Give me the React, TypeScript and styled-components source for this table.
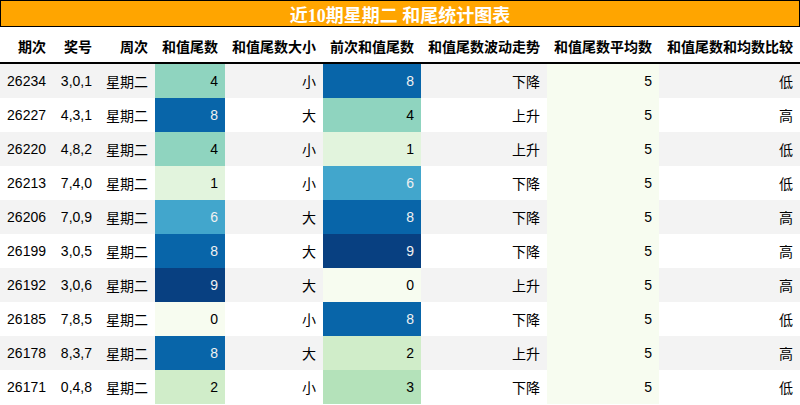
import React from "react";
import styled, { createGlobalStyle } from "styled-components";

const Global = createGlobalStyle`
  html, body { margin: 0; padding: 0; background: #ffffff; }
  body { font-family: "Liberation Sans", "Noto Sans CJK SC", sans-serif; }
`;

const Page = styled.div`
  width: 800px;
  height: 405px;
  overflow: hidden;
  display: flex;
  flex-direction: column;
`;

const Title = styled.div`
  height: 25px;
  background: #ffa500;
  border: 1px solid #000;
  display: flex;
  align-items: center;
  justify-content: center;
  color: #ffffff;
  font-family: "Liberation Serif", "Noto Sans CJK SC", serif;
  font-weight: bold;
  font-size: 18px;
  margin-bottom: 2px;
`;

const Table = styled.table`
  width: 800px;
  border-collapse: collapse;
  table-layout: fixed;
  font-size: 14px;
  color: #000;
`;

const HeadCell = styled.th`
  height: 33px;
  padding: 0 7px 0 0;
  text-align: right;
  font-weight: bold;
  white-space: nowrap;
  border-bottom: 2px solid #000;
`;

const Row = styled.tr<{ $striped: boolean }>`
  background: ${(p) => (p.$striped ? "#f3f3f3" : "#ffffff")};
`;

const Cell = styled.td<{ $bg?: string; $fg?: string }>`
  height: 34px;
  padding: 0 7px 0 0;
  text-align: right;
  white-space: nowrap;
  background: ${(p) => p.$bg ?? "transparent"};
  color: ${(p) => p.$fg ?? "#000"};
`;

const palette = [
  "#f7fcf0",
  "#e2f4dd",
  "#d0edc9",
  "#b4e2ba",
  "#8fd4bf",
  "#67c1ca",
  "#42a6cc",
  "#2387bb",
  "#0865a9",
  "#084081",
];

const fgFor = (v: number) => (v >= 6 ? "#f1f1f1" : "#000000");

const widths = [53, 46, 56, 70, 98, 98, 126, 112, 141];
const headers = [
  "期次",
  "奖号",
  "周次",
  "和值尾数",
  "和值尾数大小",
  "前次和值尾数",
  "和值尾数波动走势",
  "和值尾数平均数",
  "和值尾数和均数比较",
];

type R = [number, string, number, string, number, string, number, string];
const rows: R[] = [
  [26234, "3,0,1", 4, "小", 8, "下降", 5, "低"],
  [26227, "4,3,1", 8, "大", 4, "上升", 5, "高"],
  [26220, "4,8,2", 4, "小", 1, "上升", 5, "低"],
  [26213, "7,4,0", 1, "小", 6, "下降", 5, "低"],
  [26206, "7,0,9", 6, "大", 8, "下降", 5, "高"],
  [26199, "3,0,5", 8, "大", 9, "下降", 5, "高"],
  [26192, "3,0,6", 9, "大", 0, "上升", 5, "高"],
  [26185, "7,8,5", 0, "小", 8, "下降", 5, "低"],
  [26178, "8,3,7", 8, "大", 2, "上升", 5, "高"],
  [26171, "0,4,8", 2, "小", 3, "下降", 5, "低"],
];

export default function App() {
  return (
    <Page>
      <Global />
      <Title>近10期星期二 和尾统计图表</Title>
      <Table>
        <colgroup>
          {widths.map((w, i) => (
            <col key={i} style={{ width: w }} />
          ))}
        </colgroup>
        <thead>
          <tr>
            {headers.map((h) => (
              <HeadCell key={h}>{h}</HeadCell>
            ))}
          </tr>
        </thead>
        <tbody>
          {rows.map((r, i) => (
            <Row key={r[0]} $striped={i % 2 === 0}>
              <Cell>{r[0]}</Cell>
              <Cell>{r[1]}</Cell>
              <Cell>星期二</Cell>
              <Cell $bg={palette[r[2]]} $fg={fgFor(r[2])}>
                {r[2]}
              </Cell>
              <Cell>{r[3]}</Cell>
              <Cell $bg={palette[r[4]]} $fg={fgFor(r[4])}>
                {r[4]}
              </Cell>
              <Cell>{r[5]}</Cell>
              <Cell $bg={palette[0]}>{r[6]}</Cell>
              <Cell>{r[7]}</Cell>
            </Row>
          ))}
        </tbody>
      </Table>
    </Page>
  );
}
